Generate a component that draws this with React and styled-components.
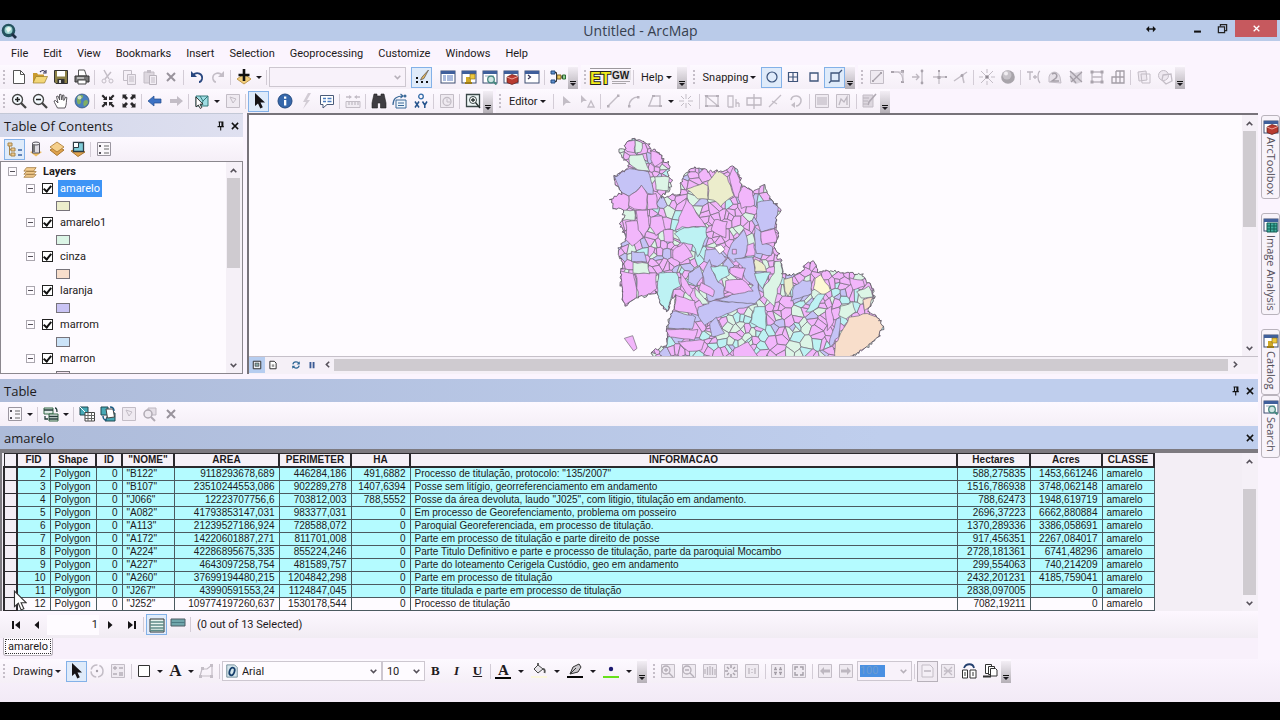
import React from 'react'
import styled, { createGlobalStyle, css } from 'styled-components'

const GlobalStyle = createGlobalStyle`
  * { box-sizing: border-box; }
  body {
    margin: 0;
    background: #000;
    color: #1d1a20;
    font-family: Roboto, "Open Sans", sans-serif;
    font-size: 11px;
  }
  button, input, select {
    font: inherit;
    color: inherit;
    margin: 0;
    padding: 0;
    border: none;
    background: transparent;
    border-radius: 0;
  }
  h1, h2 {
    margin: 0;
    font-family: "Open Sans", "Noto Sans", sans-serif;
    font-weight: 400;
  }
`

/* ---------- icons ---------- */

const off = '#c3bdc6'
const line = (d, color = '#444', w = 1.3) => <path d={d} fill="none" stroke={color} strokeWidth={w} />
const win = <><rect x="1" y="2" width="14" height="12" fill="#fff" stroke="#3f4f73" /><path d="M1 2h14v3H1z" fill="#3f5f9b" /></>
const page = <path d="M1.5 1.5h13v13h-13z" fill="#efeaf1" stroke={off} />
const arrow = (c) => <path d="M4 0v13l3-2.600 2.300 5 2.500-1.200-2.300-4.700H14z" fill={c} />

const icons = {
  new: <><path d="M2.500 1.500h7l4 4v9h-11z" fill="#fff" stroke="#555" />{line('M9.500 1.500v4h4', '#555', 1)}</>,
  open: <><path d="M1 14V4h4l1 1.500h6V14z" fill="#c99a2e" /><path d="M1 14l3-6.500h11.500L12.500 14z" fill="#f3d778" stroke="#9a7b2a" strokeWidth=".7" />{line('M8 3c2-2 4-2 5 0m1-2v3h-3', '#335', 1.1)}</>,
  save: <><path d="M1.500 1.500h13v13H3l-1.500-1.500z" fill="#8a7f45" stroke="#333" /><path d="M4 2h8v5.500H4z" fill="#fff" /><path d="M4.500 10h7v4.500h-7z" fill="#333" /><path d="M6 11h2v3H6z" fill="#ddd" /></>,
  print: <><path d="M4.500 1h6l2 6h-8z" fill="#fff" stroke="#555" /><path d="M1 7h14v6H1z" fill="#777" stroke="#333" /><path d="M4 11h8v4H4z" fill="#fff" stroke="#444" />{line('M3 9h7', '#ddd')}</>,
  cut: <>{line('M4 1l5 9M11 3L5 10', off, 1.500)}<circle cx="4" cy="12" r="2" fill="none" stroke={off} /><circle cx="11" cy="12" r="2" fill="none" stroke={off} /></>,
  copy: <><path d="M2.500 1.500h8v10h-8z" fill="#f5f0f7" stroke={off} /><path d="M6.500 5.500h8v10h-8z" fill="#efeaf1" stroke={off} />{line('M8 8h5M8 10h5M8 12h5', off, 1)}</>,
  paste: <><path d="M2 3h10v11H2z" fill="#ddd7df" stroke={off} /><path d="M5 1h4v3H5z" fill={off} /><path d="M7.500 6.500h7v9h-7z" fill="#f3eef5" stroke="#b9b3bc" />{line('M9 9h4M9 11h4M9 13h4', off, 1)}</>,
  del: line('M4 4l8 8M12 4l-8 8', '#99939c', 2),
  undo: <>{line('M4 6c4-4 10-1 9 4-.500 2-2 3-3 3', '#28467f', 1.800)}<path d="M2 2v6h6z" fill="#28467f" /></>,
  redo: <>{line('M12 6C8 2 2 5 3 10c.500 2 2 3 3 3', off, 1.600)}<path d="M14 2v6H8z" fill={off} /></>,
  add: <><path d="M1 10l7-5 7 5-7 5z" fill="#f0cd7c" stroke="#c29a4e" />{line('M8 0v12M2.500 6h11', '#111', 2.600)}</>,
  sketch: <><path d="M2 12h2v2H2zM7 12h2v2H7zM12 12h2v2h-2zM2 8h2v2H2z" fill="#111" /><path d="M14.500 1L8 8l-1.500 3L10 9.500z" fill="#e0b25a" stroke="#555" strokeWidth=".7" /></>,
  winTable: <>{win}{line('M3 7h3M7 7h6M3 9h3M7 9h6M3 11h3M7 11h6', '#5679bd', 1)}</>,
  winCatalog: <>{win}<path d="M5 8h5v6H5z" fill="#d0a824" /><path d="M9 5h5v5H9z" fill="#efc93d" stroke="#80671b" strokeWidth=".6" /><path d="M4 13h7v2H4z" fill="#9b7b1b" /></>,
  winSearch: <>{win}{line('M3 7h9', '#9ab', 1)}<circle cx="9" cy="10.500" r="3.300" fill="#cfe5e3" stroke="#45877f" strokeWidth="1.300" />{line('M12 13l2.500 2.500', '#45877f', 2)}</>,
  winToolbox: <>{win}<path d="M4 8l5-2.500 6 2V13l-6 2.500-5-2z" fill="#b83a30" stroke="#5f1c18" strokeWidth=".7" /><path d="M4 8l5 2 6-2.500" fill="none" stroke="#f2a69b" /></>,
  winPython: <>{win}{line('M4 6l2.500 2L4 10', '#335', 1.200)}</>,
  winImage: <>{win}<path d="M4 6h10v9H4z" fill="#3fae9e" stroke="#155e54" />{line('M7.500 6v9M11 6v9M4 9h10M4 12h10', '#155e54', 1)}</>,
  model: <><path d="M1 2h4v3H1zM1 11h4v3H1z" fill="#5d8fcf" stroke="#244a7c" /><path d="M7 6h4v4H7z" fill="#eac75d" stroke="#7a6020" /><path d="M12.500 6h3v4h-3z" fill="#8fcf93" stroke="#2f6a33" />{line('M5 3.500h1.500V8M5 12.500h1.500V8H7M11 8h2', '#333', 1)}</>,
  zoomIn: <><circle cx="6.500" cy="6.500" r="5" fill="#f5fbff" stroke="#444" strokeWidth="1.300" />{line('M10 10l5 5', '#444', 2.300)}{line('M4 6.500h5M6.500 4v5', '#222', 1.500)}</>,
  zoomOut: <><circle cx="6.500" cy="6.500" r="5" fill="#f5fbff" stroke="#444" strokeWidth="1.300" />{line('M10 10l5 5', '#444', 2.300)}{line('M4 6.500h5', '#222', 1.500)}</>,
  pan: <path d="M4.500 15C3 12 1.500 10 1 8l1.500-.500L5 10 3.500 3.500l1.500-.500 1.700 4L6.500 1.500 8 1.300 8.800 7l.9-5 1.300.2-.2 5.300 1.900-3.500 1.200.6C13 8 14 11 12 15z" fill="#fff" stroke="#4a464c" strokeWidth=".9" />,
  globe: <><circle cx="8" cy="8" r="7" fill="#4a7fbe" stroke="#2a4a70" strokeWidth=".7" /><path d="M4 3c3-2 6-1 5 1S6 6 7 8s-2 4-3 3-2-5 0-8zM10 8c2-2 4-1 4 1s-3 5-4 4-1-3 0-5z" fill="#7fae62" /><circle cx="5.500" cy="4.500" r="2" fill="#fff" opacity=".6" /></>,
  shrink: <path d="M7 7H3l1.200-1.200L1.500 3 3 1.500l2.800 2.700L7 3zM9 7V3l1.200 1.200L13 1.500 14.500 3l-2.700 2.800L13 7zM7 9v4l-1.200-1.200L3 14.500 1.500 13l2.700-2.800L3 9zM9 9h4l-1.200 1.200 2.700 2.800-1.500 1.500-2.800-2.700L9 13z" fill="#2a282b" />,
  expand: <path d="M1.500 1.500H6L4.800 2.800 7 5 5 7 2.800 4.800 1.500 6zM14.500 1.500V6l-1.300-1.200L11 7 9 5l2.200-2.200L10 1.500zM1.500 14.500V10l1.300 1.200L5 9l2 2-2.200 2.200L6 14.500zM14.500 14.500H10l1.200-1.300L9 11l2-2 2.200 2.200L14.500 10z" fill="#2a282b" />,
  back: <path d="M1 8l6-5v3h7v4H7v3z" fill="#3c72c4" stroke="#234c8d" strokeWidth=".7" />,
  forward: <path d="M15 8L9 3v3H2v4h7v3z" fill={off} />,
  selFeature: <><path d="M2 3h12v10H2z" fill="#9fdde4" stroke="#377" />{line('M6 3l3 5 5-5M9 8l-2 5', '#377', 1)}<path d="M2 4v10l2.300-2 2 3.500 1.500-1L6 11.200H9z" fill="#fff" stroke="#222" strokeWidth=".9" /></>,
  clearSel: <>{page}{line('M5 4l6 2-3 4z', off, 1)}</>,
  arrow: arrow('#151316'),
  info: <><circle cx="8" cy="8" r="7" fill="#3667ab" stroke="#244a80" /><path d="M7 7h2.300v5.500H7zM7 3.500h2.300v2.200H7z" fill="#fff" /></>,
  bolt: <path d="M10 0L5 9h3l-3 7 7-9H9l4-7z" fill="#d2ccd5" />,
  html: <><path d="M1.500 2.500h13v9H8l-4 3.500v-3.500H1.500z" fill="#fff" stroke="#4a5a78" />{line('M4 5.500h3M8.500 5.500h4M4 8.500h3M8.500 8.500h4', '#4c7cc0', 1.600)}</>,
  measure: <><path d="M1 8.500h14v6H1z" fill="#f1ecf3" stroke={off} />{line('M4 9v3M7 9v3M10 9v3M13 9v3M1 4h5M10 4h5', off, 1.300)}<path d="M7 4L4 2v4zM9 4l3-2v4z" fill={off} /></>,
  find: <path d="M3 1h3v2h4V1h3l2 9v5H9.500v-5h-3v5H1v-5z" fill="#3f3d42" stroke="#222" strokeWidth=".6" />,
  route: <><path d="M4 7h10v8H4z" fill="#eef5fb" stroke="#3c6a99" />{line('M1 12c0-7 4-9 10-9M8.500 1L11 3 8.500 5M6 10h6M6 12.500h6', '#3c6a99', 1.200)}<circle cx="13" cy="3" r="1.500" fill="#3c6a99" /></>,
  xy: <><circle cx="8" cy="3.500" r="2.300" fill="none" stroke="#336ca8" strokeWidth="1.300" />{line('M2 8.500l4 6M6 8.500l-4 6M9.500 8.500L11.800 12l2.200-3.500M11.800 12v3', '#24528c', 1.500)}</>,
  time: <>{page}<circle cx="8" cy="8.500" r="4" fill="none" stroke={off} strokeWidth="1.300" />{line('M8 6v3h3', off, 1)}</>,
  viewer: <><path d="M1.500 1.500h13v12h-13z" fill="#eef6f6" stroke="#3b4748" strokeWidth="1.300" /><circle cx="8" cy="7" r="3.500" fill="#fff" stroke="#3b4748" />{line('M6 7h4M8 5v4M10.500 9.500L15 15', '#26302f', 1.300)}</>,
  snapPoint: <circle cx="8" cy="8" r="5" fill="none" stroke="#39527b" strokeWidth="1.200" />,
  snapEnd: line('M3.500 3.500h9v9h-9zM8 3.500v9M3.500 8h9', '#3f557b', 1.200),
  snapVertex: line('M4 4h8v8H4z', '#3f557b', 1.300),
  snapEdge: <>{line('M4 4h8v8H4zM2 14l2-2M12 4l3-3', '#3f557b', 1.300)}</>,
  gA: <>{page}{line('M4 12l8-8', '#a9a3ac')}<path d="M3 11h2v2H3zM11 3h2v2h-2z" fill="#a9a3ac" /></>,
  gB: <>{line('M2 3h6c3 1 5 5 5 10', off)}<path d="M1 2h3v2H1zM11 1h3v3h-3zM11 12h3v2h-3z" fill="#a9a3ac" />{line('M8 3h5v10', off, 1)}</>,
  gC: <>{line('M1 8h6M11 1v14M5 5l3 3-3 3', '#bdb7c0')}<circle cx="11" cy="2" r="1.400" fill="#a9a3ac" /><circle cx="11" cy="14" r="1.400" fill="#a9a3ac" /></>,
  gD: <>{line('M1 8h14M7 1v14', off)}<path d="M5.500 7h3v3h-3zM13 7h2v2h-2zM6 1h2v2H6z" fill="#a9a3ac" /></>,
  gE: <>{line('M1 12L14 3M9 5l2 9', off, 1.500)}<circle cx="9" cy="6.500" r="1.500" fill="#a9a3ac" /></>,
  burst: <>{line('M2 2l12 12M14 2L2 14M8 0v4M8 12v4M0 8h4M12 8h4', off, 1)}<circle cx="8" cy="8" r="1.800" fill="#8f8992" /></>,
  sphere: <><circle cx="8" cy="8" r="6.800" fill="#a8a4aa" /><circle cx="7" cy="6" r="4.500" fill="#c7c3c9" /><circle cx="6" cy="4.500" r="2" fill="#f1eef2" /></>,
  gF: line('M1 3h6M4 3v8M7 8h4M9 6v4M14 2c-2 1-2 4-2 6s0 4 2 6', '#bdb7c0'),
  gG: <><path d="M2 13V8c1-6 9-7 11 0l1 6z" fill="#e6e0e8" stroke={off} />{line('M5 5c4-2 6 1 4 4l-4 3h7', '#a49ea7', 1.500)}</>,
  gH: <><path d="M2 2l5 2 7-2v11l-6 2-6-3z" fill="#d8d3db" />{line('M2 2l12 11M14 3L3 13M2 7l6 7', '#a49ea7')}</>,
  gI: <>{line('M3 3h10v10H3zM3 8h10', '#bdb7c0')}<path d="M1.500 1.500h3v3h-3zM11.500 1.500h3v3h-3zM1.500 11.500h3v3h-3zM11.500 11.500h3v3h-3z" fill="#a9a3ac" /></>,
  gJ: line('M6 2h8v12H2V8h12M6 2v12M10 2v12', '#a49ea7'),
  gK: <><path d="M2 3l8-1 1 9-8 1z" fill="#eee8f0" stroke={off} /><path d="M5 5h9v9H6z" fill="none" stroke={off} /></>,
  gL: <><circle cx="6.500" cy="6.500" r="5" fill="#eee8f0" stroke={off} />{line('M6 6l8-1 1 7-6 3-4-4z', off)}</>,
  editTool: <path d="M5 3v10l3-3h5z" fill={off} />,
  editNote: <><path d="M2 2v8l2.500-2H8z" fill={off} /><path d="M9 14l3-6 3 6z" fill="none" stroke={off} strokeWidth="1.300" /></>,
  segment: <>{line('M3 13L13 3', off, 1.500)}<path d="M2 12h2.500v2.500H2zM12 1.500h2.500V4H12z" fill="#b5afb8" /></>,
  arc: <>{line('M3 13c0-5 4-9 9-9', off, 1.500)}<path d="M2 12h2.500v2.500H2zM11 3h2.500v2.500H11z" fill="#b5afb8" /></>,
  trace: <>{line('M2 13L6 3h7v10zM1 13h4', off, 1.400)}<path d="M5 2h3v2H5zM12 12h3v2h-3z" fill="#b5afb8" /></>,
  pointTool: <>{line('M8 1v5M8 10v5M1 8h5M10 8h5M3 3l3 3M13 3l-3 3M3 13l3-3M13 13l-3-3', off, 1)}</>,
  reshape: <>{line('M2 3v10h12L2 3h12v10', off, 1.300)}<path d="M1 2h3v2H1zM12 2h3v2h-3zM1 12h3v2H1zM12 12h3v2h-3z" fill="#b5afb8" /></>,
  cutPoly: line('M3 14V3h5v11H3M11 6v8M14 10v4M11 10h3', off, 1.300),
  split: line('M1 5h14v7H1zM8 1v15', '#bdb7c0', 1.300),
  splitLine: <>{line('M2 14L14 2M5 8l5 3', off, 1.300)}</>,
  rotate: <>{line('M3 7c1-6 11-5 10 1 0 3-3 5-5 5', off, 1.600)}<path d="M7 9v6l-4-3z" fill={off} /></>,
  attrs: <>{page}<path d="M3 4h10v8H3z" fill="#d4ced7" /></>,
  sketchProp: <>{page}{line('M4 12l2-6 3 3 3-5v8', '#bdb7c0')}</>,
  createFeat: <><path d="M2 2h10v12H2z" fill="#ddd7df" stroke={off} />{line('M15 1L8 9l-1 3', '#b0aab3', 1.600)}{line('M2 5h6M2 8h5M2 11h4', '#b9b3bc', 1)}</>,
  drawOrder: <><path d="M1 2h4v3H1zM4 7h4v3H4zM4 12h4v3H4z" fill="#edc98d" stroke="#a7854b" />{line('M2.500 5v9H4M2.500 8.500H4', '#a7854b', 1)}{line('M11 9h4M11 14h4', '#3b66a7', 1.600)}</>,
  source: <><path d="M2 11l6-2 6 2-6 4.500z" fill="#edbd65" /><path d="M4.500 2h7v10h-7z" fill="#dedbe2" stroke="#55525c" /><ellipse cx="8" cy="2.500" rx="3.500" ry="1.500" fill="#f4f3f6" stroke="#55525c" /><path d="M5 4h2v7H5z" fill="#777" /></>,
  visible: <><path d="M1 9l7-4 7 4-7 5.500z" fill="#dfa14b" stroke="#a9762f" /><path d="M1 6l7-5 7 5-7 5z" fill="#f5cf8c" stroke="#a9762f" strokeWidth=".8" /></>,
  bySel: <><path d="M1 10l7-3 7 4-7 4.500z" fill="#e0a34e" stroke="#a9762f" /><path d="M3.500 1.500h10v9h-10z" fill="#7fcbd8" stroke="#2c3b44" strokeWidth="1.300" /><path d="M3.500 1.500h5v5h-5z" fill="#fff" stroke="#2c3b44" /></>,
  options: <><path d="M1.500 1.500h13v13h-13z" fill="#faf7fb" stroke="#9b96a0" />{line('M8 5h5M8 8h5M8 12h5', '#666', 1)}<path d="M3 4h2v2H3zM3 11h2v2H3z" fill="#55515a" /></>,
  related: <><path d="M1 2h9v6H1z" fill="#dfe9e6" stroke="#364" /><path d="M6 8h9v7H6z" fill="#dfe9e6" stroke="#364" />{line('M1 4h9M6 10.500h9M6 13h9M2 10v3h3M12 2c2 0 2 2 2 4', '#253c3a', 1.300)}</>,
  selAttr: <><path d="M1 1h8v8H1z" fill="#47a9b7" stroke="#1f4850" />{line('M1 1l8 8', '#fff', 1)}<path d="M6 6.500h9.500v8.500H6z" fill="#fff" stroke="#444" />{line('M6 9.500h9.500M6 12.500h9.500M9 6.500V15M12.500 6.500V15', '#666', 1)}</>,
  switchSel: <><path d="M1 1h7v8H1zM9 7h6v8H5z" fill="#47a9b7" stroke="#1f4850" /><path d="M6 3h7l1.500 8-7 1z" fill="#fff" stroke="#444" />{line('M3 10c0 4 2 4 4 4M10 1c3 0 4 1 4 4', '#1d5c84', 1.500)}</>,
  zoomSel: <><path d="M6 2h8v7H6z" fill="#e4dee6" stroke="#bdb7c0" /><circle cx="6" cy="8" r="4" fill="#eee9f0" stroke="#b0aab3" strokeWidth="1.500" />{line('M9 11l4 4', '#b0aab3', 2)}</>,
  first: <path d="M4 4h2v8H4zM12 4v8L7 8z" fill="#151316" />,
  prev: <path d="M10 4v8L5.500 8z" fill="#151316" />,
  next: <path d="M6 4v8l4.500-4z" fill="#151316" />,
  last: <path d="M11 4h2v8h-2zM5 4v8l5-4z" fill="#151316" />,
  allRows: <><path d="M1 2h14v13H1z" fill="#e7f3ef" stroke="#333" />{line('M1 5h14M1 8h14M1 11h14M1 13.500h14', '#5d8b88', 1.500)}</>,
  selRows: <><path d="M1 2h14v7H1z" fill="#6fa6ab" stroke="#4d5c64" />{line('M1 5.500h14', '#4b7c84', 1)}</>,
  spin: <><circle cx="8" cy="8" r="6" fill="none" stroke={off} strokeWidth="1.500" strokeDasharray="8 2" /><circle cx="8" cy="8" r="1.200" fill="#a49ea7" /></>,
  nudge: <>{page}{line('M3 5h4M5 3v4M9 5h4M3 11h4M9 10h4M9 12h4', '#b5afb8', 1.300)}</>,
  rect: <path d="M2.500 2.500h11v11h-11z" fill="#fff" stroke="#333" />,
  vertices: <>{line('M2 13L4 6h5l5-4v11z', off, 1.200)}<path d="M1 12h3v3H1zM3 4h3v3H3zM12 1h3v3h-3zM12 12h3v3h-3z" fill="#c4bec7" /></>,
  fillColor: <><path d="M3 6l4-4 5 4-5 4z" fill="#e8e5ea" stroke="#444" />{line('M7 2V0M12 6c2 0 2 2 1.500 4', '#555', 1.800)}<path d="M0 13h16v2H0z" fill="#fbf6dc" /></>,
  lineColor: <><path d="M3 11l3-7 6-3 2 3-3 5z" fill="#cbc8cd" stroke="#333" />{line('M3 11l6-6', '#333', 1)}<path d="M0 13h16v2H0z" fill="#050505" /></>,
  markColor: <><circle cx="8" cy="6" r="2.200" fill="#1c1870" /><path d="M0 13h16v2H0z" fill="#68e01c" /></>,
  pZoomIn: <>{page}<circle cx="6" cy="7" r="4" fill="none" stroke="#b5afb8" strokeWidth="1.300" />{line('M9 10l4 4M4 7h4M6 5v4', '#b5afb8')}</>,
  pZoomOut: <>{page}<circle cx="6" cy="7" r="4" fill="none" stroke="#b5afb8" strokeWidth="1.300" />{line('M9 10l4 4M4 7h4', '#b5afb8')}</>,
  pPan: <>{page}{line('M3 11V6M5.500 12V4M8 12V3M10.500 12V4M13 12V6', '#bdb7c0')}</>,
  pFull: <>{page}{line('M8 2v3M8 11v3M2 8h3M11 8h3M4 4l2 2M12 4l-2 2M4 12l2-2M12 12l-2-2', '#aaa4ad', 1.500)}</>,
  pOne: <>{page}{line('M5 5v6M11 5v6M8 6v1M8 9v1', '#bdb7c0')}</>,
  pIn: <>{page}{line('M4 6.500h3M5.500 4v3M9 6.500h3M10.500 4v3M4 9.500h3M5.500 9v3M9 9.500h3M10.500 9v3', '#a49ea7', 1.400)}</>,
  pOut: <>{page}{line('M4 7V4h3M12 7V4H9M4 9v3h3M12 9v3H9', '#a49ea7', 1.400)}</>,
  pBack: <>{page}<path d="M3 8l4-4v2.500h6v3H7V12z" fill="#bdb7c0" /></>,
  pNext: <>{page}<path d="M13 8L9 4v2.500H3v3h6V12z" fill="#bdb7c0" /></>,
  draft: <><path d="M3 2h8l3 3v9H3z" fill="#f4eff6" stroke={off} />{line('M5 8h7', '#b5afb8')}</>,
  focusFrame: <>{page}{line('M4 4l8 8M12 4l-8 8M4 8h8', off)}</>,
  changeLayout: <><path d="M1.500 7h5v8h-5zM9 7h6v8H9z" fill="#fff" stroke="#333" />{line('M3 5c2-5 9-5 10 0', '#24406f', 1.800)}{line('M3 10h2M3 12h2M11 10h2M11 12h2', '#333', 1.200)}</>,
  dataDriven: <><path d="M3.500 1.500h6v9h-6z" fill="#fff" stroke="#333" /><path d="M6.500 3.500h6v8h-6z" fill="#fff" stroke="#333" /><path d="M8.500 5.500h5l1.500 1.500v6H8.500z" fill="#fff" stroke="#333" />{line('M1 13.500h8', '#333', 2)}</>,
  dataView: <><path d="M2 2h12v12H2z" fill="#eef3f8" stroke="#333" strokeWidth="1.600" /><path d="M5 5h6v5H5z" fill="#8aa" stroke="#333" /></>,
  layoutView: <><path d="M3 2h7l3 3v9H3z" fill="#fff" stroke="#333" strokeWidth="1.600" /><path d="M6 7h4v4H6z" fill="#999" /></>,
  refresh: <>{line('M3 7c1-5 8-5 10-1M13 9c-1 5-8 5-10 1', '#2e6796', 2)}<path d="M14 2v5H9zM2 14V9h5z" fill="#2e6796" /></>,
  pause: <path d="M4 3h3v10H4zM9 3h3v10H9z" fill="#3b5a94" />,
  pin: line('M4 1.500h7v7M5.500 2v7M9.500 2v7M2.500 9h10M7.500 9v6', '#111', 1.700),
  close: line('M3 3l10 10M13 3L3 13', '#111', 2.300),
  up: line('M3 11l5-5 5 5', '#555059', 2.800),
  down: line('M3 5l5 5 5-5', '#555059', 2.800),
  left: line('M11 3L6 8l5 5', '#555059', 2.800),
  right: line('M5 3l5 5-5 5', '#555059', 2.800),
  resize: <>{line('M2 8h12', '#111', 2.200)}<path d="M0 8l5-5v10zM16 8l-5-5v10z" fill="#111" /></>,
  minimize: <path d="M3 11h10v3H3z" fill="#111" />,
  restore: <><path d="M2 5.500h9V14H2z" fill="none" stroke="#222" strokeWidth="1.800" />{line('M5 5V2.500h9V11h-3', '#222', 1.800)}</>,
  logo: <><circle cx="7.500" cy="7.500" r="6.800" fill="#24535f" /><circle cx="7.500" cy="7" r="4" fill="#9ad2cf" /><path d="M5 6c2-3 5-2 5 0s-2 2-3 4z" fill="#e8f6f0" />{line('M11 11l4 4', '#1f2f45', 2.800)}</>,
  layers: <><path d="M1 14l3-3h11l-3 3zM1 10.500l3-3h11l-3 3zM1 7l3-4h11l-3 4z" fill="#f6cf92" stroke="#a0763a" strokeWidth=".9" /></>,
  fontMark: <><path d="M2 1h9l3 3v11H2z" fill="#d5e6ec" stroke="#6b8794" /><ellipse cx="8" cy="8.500" rx="2.800" ry="4.500" transform="rotate(20 8 8.500)" fill="none" stroke="#173f6b" strokeWidth="2" /></>,
}

const Glyph = styled.svg`
  display: block;
  flex: none;
  width: ${(p) => p.$size || 16}px;
  height: ${(p) => p.$size || 16}px;
`

const Icon = ({ name, size }) => <Glyph viewBox="0 0 16 16" $size={size} aria-hidden="true">{icons[name]}</Glyph>

/* ---------- toolbar ---------- */

const ToolRow = styled.div`
  display: flex;
  align-items: center;
  height: 24px;
  gap: 3px;
`

const Bar = styled.div`
  display: flex;
  align-items: center;
  height: 24px;
  padding-left: ${(p) => p.$inset || 0}px;
  background: linear-gradient(#fdf9ff, #f5eff7);
`

const Grip = styled.span`
  width: 8px;
  height: 14px;
  border-right: 3px solid transparent;
  background: repeating-linear-gradient(#c5bec8 0 2px, transparent 2px 4px) no-repeat 3px 0 / 2px 14px;
`

const ToolButton = styled.button`
  display: flex;
  align-items: center;
  justify-content: center;
  flex: none;
  width: 21px;
  height: 21px;
  border: 1px solid ${(p) => (p.$on ? '#83b1e8' : 'transparent')};
  background: ${(p) => (p.$on ? '#dfebfa' : 'transparent')};
  ${(p) => p.$framed && css`
    border-color: #b7b1ba;
    background: #f0eaf2;
  `}
`

const TextButton = styled.button`
  display: flex;
  align-items: center;
  gap: 2px;
  height: 21px;
  padding: 0 5px;
  white-space: nowrap;
`

const LogoButton = styled.button`
  flex: none;
  width: 42px;
  height: 22px;
  svg { display: block; }
`

const DropButton = styled.button`
  display: flex;
  align-items: center;
  justify-content: center;
  width: ${(p) => (p.$wide ? 15 : 10)}px;
  height: 20px;
`

const Caret = styled.span`
  border: 3px solid transparent;
  border-top: 3px solid #1d1a20;
  border-bottom: none;
`

const Divider = styled.span`
  flex: none;
  width: 1px;
  height: 15px;
  margin: 0 2px;
  background: ${(p) => (p.$blank ? 'transparent' : '#d3ccd6')};
`

const More = styled.button`
  display: flex;
  flex-direction: column;
  align-items: center;
  justify-content: flex-end;
  gap: 1px;
  width: 10px;
  height: 22px;
  padding-bottom: 3px;
  background: linear-gradient(#f3eef5, #b5b0b7);
  align-self: flex-end;
  &::before {
    content: '';
    width: 6px;
    height: 1px;
    background: #111;
  }
`

const Combo = styled.select`
  appearance: none;
  height: 20px;
  width: ${(p) => p.$width}px;
  padding: 0 18px 0 ${(p) => p.$pad || 4}px;
  border: 1px solid #cdc7d0;
  background: ${(p) => (p.disabled ? '#f8f2fa' : '#fefbff')};
  opacity: 1;
`

const ComboBox = styled.label`
  position: relative;
  display: flex;
  align-items: center;
`

const ComboChevron = styled.span`
  position: absolute;
  right: 4px;
  opacity: ${(p) => (p.$faded ? 0.4 : 1)};
  pointer-events: none;
`

const ComboMark = styled.span`
  position: absolute;
  left: 3px;
  pointer-events: none;
`

const Chosen = styled.span`
  position: absolute;
  left: 3px;
  width: 25px;
  height: 12px;
  background: #4a90e2;
  color: #6d9bd0;
  line-height: 12px;
`

const Emphasis = styled.span`
  font-family: "Liberation Serif", serif;
  font-size: ${(p) => (p.$kind === 'A' ? 17 : 13)}px;
  font-weight: 700;
  font-style: ${(p) => (p.$kind === 'I' ? 'italic' : 'normal')};
  text-decoration: ${(p) => (p.$kind === 'U' ? 'underline' : 'none')};
`

const InkButton = styled(ToolButton)`
  span {
    width: 16px;
    border-bottom: 2px solid #050505;
    font: 700 15px/13px "Liberation Serif", serif;
  }
`

const Select = ({ label, width, value, faded, mark, chosen }) => (
  <ComboBox>
    <Combo aria-label={label} $width={width} $pad={mark ? 19 : 4} disabled={faded} defaultValue={value}>
      <option>{value}</option>
    </Combo>
    {mark && <ComboMark><Icon name={mark} size={14} /></ComboMark>}
    {chosen && <Chosen>{chosen}</Chosen>}
    <ComboChevron $faded={faded}><Icon name="down" size={9} /></ComboChevron>
  </ComboBox>
)

const EtLogo = () => (
  <LogoButton aria-label="ET GeoWizards">
    <svg width="42" height="22" viewBox="0 0 42 22">
      <path d="M1 2.500h41" stroke="#9c989d" />
      <rect x="22" y="4" width="20" height="10" fill="#e3dfe4" />
      <path d="M23 15.500h18M23 17.500h14" stroke="#aaa6ab" />
      <text x="1" y="18" fontFamily="Liberation Sans" fontWeight="700" fontSize="16" fill="#f0ea1c" stroke="#222" strokeWidth="2" paintOrder="stroke">ET</text>
      <text x="23" y="13" fontFamily="Liberation Sans" fontWeight="700" fontSize="10" fill="#1b1b1b">GW</text>
    </svg>
  </LogoButton>
)

/* "|" is a divider, "_" a blank gap, "v" and "V" drop arrows; a leading "*" marks a pressed tool */
const Tools = ({ items }) => items.split(' ').map((item, i) => {
  if (item === '|' || item === '_') return <Divider key={i} $blank={item === '_'} />
  if (item === 'v' || item === 'V') return <DropButton key={i} $wide={item === 'V'} aria-label="More"><Caret /></DropButton>
  const name = item.replace(/^[*#]/, '')
  return (
    <ToolButton key={i} aria-label={name} $on={item[0] === '*'} $framed={item[0] === '#'}>
      <Icon name={name} />
    </ToolButton>
  )
})

/* ---------- frame ---------- */

const Page = styled.div`
  display: flex;
  flex-direction: column;
  height: 100vh;
  min-height: 560px;
  padding: 20px 0 18px;
`

const Frame = styled.div`
  flex: 1;
  min-height: 0;
  display: flex;
  flex-direction: column;
  background: #fbf4fe;
`

const TitleBar = styled.header`
  display: grid;
  grid-template-columns: 1fr auto 1fr;
  align-items: center;
  height: 21px;
  padding-left: 1px;
  background: #bacbe9;
  h1 {
    font-size: 14px;
    line-height: 20px;
    color: #37404f;
  }
`

const WindowButtons = styled.div`
  display: flex;
  justify-content: flex-end;
  align-items: center;
  align-self: start;
  padding-right: 3px;
`

const WindowButton = styled.button`
  display: flex;
  align-items: center;
  justify-content: center;
  width: 25px;
  height: 17px;
  &:first-child { margin-right: 22px; }
`

const CloseWindow = styled(WindowButton)`
  width: 42px;
  background: #c6595e;
  path { stroke: #fff; }
`

const Menu = styled.nav`
  display: flex;
  align-items: center;
  gap: 15px;
  height: 24px;
  padding-left: 11px;
`

const Body = styled.div`
  flex: 1;
  min-height: 0;
  display: flex;
`

const Work = styled.div`
  flex: 1;
  min-width: 0;
  display: flex;
  flex-direction: column;
`

const Upper = styled.div`
  flex: 1;
  min-height: 0;
  display: flex;
  gap: 4px;
  padding-bottom: 5px;
`

const PanelHead = styled.div`
  display: flex;
  align-items: center;
  flex: none;
  height: 23px;
  padding: 0 1px 0 4px;
  background: ${(p) => (p.$pale ? 'linear-gradient(90deg, #d2d7ea, #dfe0f0)' : 'linear-gradient(90deg, #adbbd9, #bfceed 70%)')};
  h2 {
    flex: 1;
    font-size: 13px;
    line-height: 20px;
  }
`

const HeadButton = styled.button`
  display: flex;
  justify-content: center;
  width: 14px;
`

/* ---------- table of contents ---------- */

const Contents = styled.aside`
  flex: none;
  width: 243px;
  display: flex;
  flex-direction: column;
  border-top: 1px solid #c3c8d6;
`

const TreeBox = styled.div`
  flex: 1;
  min-height: 0;
  display: flex;
  border: 1px solid #8b878e;
  background: #fefbff;
  overflow: hidden;
`

const Tree = styled.ul`
  flex: 1;
  margin: 0;
  padding: 1px 0 0;
  list-style: none;
`

const TreeRoot = styled.div`
  display: flex;
  align-items: center;
  gap: 6px;
  height: 17px;
  padding-left: 7px;
  font-weight: 700;
`

const Toggle = styled.button`
  flex: none;
  display: flex;
  align-items: center;
  width: 9px;
  height: 9px;
  border: 1px solid #aaa6ae;
  &::after {
    content: '';
    flex: 1;
    height: 1px;
    margin: 0 1px;
    background: #55515a;
  }
`

const Layer = styled.li`
  height: 34px;
  padding-left: 25px;
`

const LayerRow = styled.div`
  display: flex;
  align-items: center;
  height: 17px;
  label {
    line-height: 17px;
    padding: 0 2px;
    margin-left: 5px;
    background: ${(p) => (p.$active ? '#3d94f6' : 'transparent')};
    color: ${(p) => (p.$active ? '#fff' : '#1d1a20')};
  }
`

const Check = styled.input`
  appearance: none;
  display: grid;
  place-items: center;
  width: 11px;
  height: 11px;
  margin-left: 7px;
  border: 1px solid #222;
  background: #fff;
  &:checked::after {
    content: '';
    width: 3px;
    height: 6px;
    margin-bottom: 2px;
    border: solid #111;
    border-width: 0 2px 2px 0;
    rotate: 40deg;
  }
`

const Swatch = styled.span`
  display: block;
  width: 14px;
  height: 10px;
  margin: 4px 0 0 30px;
  border: 1px solid #77737a;
  background: ${(p) => p.$color};
`

/* ---------- scroll bars ---------- */

const Track = styled.div`
  flex: ${(p) => (p.$row ? 1 : 'none')};
  display: flex;
  flex-direction: ${(p) => (p.$row ? 'row' : 'column')};
  align-items: center;
  ${(p) => (p.$row ? 'height: 15px;' : 'width: 16px;')}
  padding-right: 2px;
  background: #f5f0f7;
`

const Thumb = styled.span`
  flex: ${(p) => p.$grow || 1};
  ${(p) => (p.$row ? 'height: 12px;' : 'width: 13px;')}
  background: #cfcbd0;
`

const Rest = styled.span`
  flex: ${(p) => p.$grow};
`

const Step = styled.button`
  display: flex;
  align-items: center;
  justify-content: center;
  flex: none;
  width: 14px;
  height: 16px;
`

const VScroll = ({ before = 0, size, after = 0 }) => (
  <Track>
    <Step aria-label="Scroll up"><Icon name="up" size={9} /></Step>
    <Rest $grow={before} />
    <Thumb $grow={size} />
    <Rest $grow={after} />
    <Step aria-label="Scroll down"><Icon name="down" size={9} /></Step>
  </Track>
)

/* ---------- map ---------- */

const MapPane = styled.section`
  flex: 1;
  min-width: 0;
  display: flex;
  flex-direction: column;
  border: solid #77737a;
  border-width: 2px 0 0 2px;
`

const MapRow = styled.div`
  flex: 1;
  min-height: 0;
  display: flex;
`

const Canvas = styled.div`
  flex: 1;
  overflow: hidden;
  background: #fefbff;
  svg {
    display: block;
    margin: 15px auto 0;
  }
`

const MapFoot = styled.div`
  display: flex;
  align-items: flex-start;
  height: 18px;
  padding-right: 14px;
  border-top: 1px solid #c6c0c9;
  background: #f5f0f7;
`

const ViewTab = styled.button`
  display: flex;
  align-items: center;
  justify-content: center;
  width: 16px;
  height: 16px;
  margin-right: ${(p) => p.$gap || 0}px;
  background: ${(p) => (p.$on ? '#b6cdf0' : 'transparent')};
`

const pink = '#f2b6fb'
const blue = '#c5c3f6'
const mint = '#dcf5e6'
const aqua = '#bdf2f3'
const sand = '#ecedcc'
const peach = '#f8decb'

const coast = '72,35 90,30 110,28 125,35 145,45 150,60 165,58 180,75 190,95 205,97 205,115 200,130 212,150 205,180 190,190 180,203 215,195 240,195 240,160 270,112 300,115 320,125 350,122 365,125 395,107 415,135 422,165 455,185 490,162 500,185 512,208 530,225 537,245 525,260 528,290 530,330 518,350 535,370 530,385 540,395 545,430 580,435 600,430 610,405 635,393 650,410 650,430 690,422 740,430 785,430 792,450 815,475 822,500 808,525 800,545 835,565 847,590 835,615 800,650 770,670 700,700 150,700 155,660 185,650 200,640 195,605 205,570 218,530 225,490 215,500 200,545 175,520 168,485 150,490 110,505 70,525 62,505 60,430 62,400 50,360 62,340 75,330 65,300 55,280 70,265 65,240 35,235 28,205 60,190 40,160 40,140 75,120 85,100 60,80 55,60 72,60'

// larger parcels, drawn over the small ones
const parcels = [
  [blue, '40,142 75,120 88,114 143,124 158,192 140,190 122,168 105,185 84,198 60,188 50,165'],
  [pink, '28,205 60,186 84,198 84,232 70,245 35,235'],
  [pink, '84,198 105,185 122,166 140,192 135,240 100,238 84,225'],
  [mint, '85,75 125,75 145,122 110,118 85,100'],
  [pink, '70,35 102,32 100,68 80,65 68,50'],
  [mint, '102,32 125,38 120,66 102,68'],
  [pink, '150,60 180,75 185,95 160,110 148,90'],
  [mint, '160,140 205,140 200,182 165,178'],
  [pink, '140,192 165,192 170,235 138,240'],
  [mint, '62,243 100,240 103,270 65,270'],
  [pink, '75,275 108,272 125,320 95,350 75,330'],
  [pink, '104,240 140,240 145,290 130,322 112,300'],
  [pink, '150,262 182,258 195,300 165,315 146,290'],
  [pink, '185,300 215,300 215,335 190,335'],
  [pink, '60,424 98,430 108,480 108,505 70,525 62,505'],
  [pink, '104,430 165,430 168,475 150,490 112,502'],
  [mint, '95,398 140,400 145,430 97,430'],
  [blue, '90,365 128,367 138,395 92,395'],
  [sand, '322,155 350,122 378,142 397,195 360,228 340,210 322,208'],
  [sand, '258,178 305,160 320,168 322,208 290,208'],
  [pink, '384,140 397,107 422,165 415,202 400,200'],
  [pink, '422,165 455,182 462,225 420,235 412,205'],
  [pink, '258,205 295,260 315,290 245,292 222,300 240,250'],
  [aqua, '222,310 250,292 315,290 318,320 292,380 275,345 240,338'],
  [pink, '340,268 378,275 372,325 330,300'],
  [blue, '470,218 510,210 530,230 522,295 480,305 465,270'],
  [blue, '460,290 482,305 482,335 515,350 512,378 465,370'],
  [pink, '478,308 522,295 528,335 485,345'],
  [blue, '378,380 390,340 430,298 440,340 436,378 400,395'],
  [pink, '440,345 460,340 462,378 432,378'],
  [blue, '312,360 345,355 376,385 350,410 308,395'],
  [blue, '262,430 295,410 305,440 285,470 262,455'],
  [blue, '305,430 325,390 350,455 370,470 370,500 345,510 320,515'],
  [blue, '400,385 455,380 478,500 460,525 345,510 380,500 440,480 455,465 430,445 425,410'],
  [blue, '290,532 340,512 465,522 400,540 310,585 292,560'],
  [pink, '385,412 432,415 425,448 385,430'],
  [pink, '374,452 425,448 458,482 400,495 372,480'],
  [aqua, '330,410 380,408 385,435 350,455'],
  [pink, '300,458 340,480 335,502 295,478'],
  [mint, '280,475 325,520 305,525 285,500'],
  [aqua, '172,430 228,428 240,470 218,480 200,545 168,510'],
  [pink, '240,430 275,480 265,500 240,465'],
  [pink, '215,360 250,340 275,378 240,400 215,385'],
  [pink, '225,498 280,512 290,555 218,540'],
  [blue, '210,542 285,560 275,598 200,595'],
  [pink, '195,598 290,600 280,628 205,620'],
  [sand, '460,385 490,405 495,425 462,425'],
  [mint, '485,475 520,430 520,395 540,395 545,445 530,478 520,530 490,500'],
  [aqua, '462,432 508,425 485,478 465,450'],
  [aqua, '460,532 492,528 495,602 450,580'],
  [blue, '570,512 580,465 605,452 630,452 632,490'],
  [sand, '548,448 575,440 578,470 562,500 550,485'],
  ['#fdf8d4', '642,445 660,435 690,480 665,495 638,475'],
  [peach, '785,510 815,500 808,530 790,540'],
  [peach, '715,620 745,562 800,550 835,565 847,590 830,625 770,670 700,700 705,640'],
  [mint, '720,530 755,515 762,545 735,565 712,555'],
  [blue, '705,565 720,565 712,620 690,650 685,640'],
  [pink, '672,540 690,530 700,575 680,600'],
  [blue, '325,580 345,562 370,610 335,622'],
  [mint, '765,485 805,470 815,500 780,505'],
  [pink, '745,445 785,450 790,470 755,480'],
  [pink, '400,655 440,635 480,690 395,690'],
  [pink, '230,635 310,630 300,660 260,665'],
  [aqua, '615,545 650,492 672,492 650,530 625,548'],
]

const palette = [pink, pink, pink, pink, pink, mint, pink, blue, pink, aqua, mint]
const coolPalette = [aqua, aqua, mint, aqua, pink, mint]

const noise = (n) => {
  const s = Math.sin(n * 127.1 + 11.7) * 43758.5453
  return s - Math.floor(s)
}

const toPoints = (text) => text.split(' ').map((pair) => pair.split(',').map(Number))
const toPath = (pts) => `M${pts.map((p) => `${p[0].toFixed(1)},${p[1].toFixed(1)}`).join('L')}Z`

// break long edges into short crooked ones
const roughen = (pts, step, amount) => pts.flatMap((a, i) => {
  const b = pts[(i + 1) % pts.length]
  const n = Math.max(1, Math.round(Math.hypot(b[0] - a[0], b[1] - a[1]) / step))
  return Array.from({ length: n }, (_, k) => {
    const t = k / n
    const x = a[0] + (b[0] - a[0]) * t
    const y = a[1] + (b[1] - a[1]) * t
    return [x + (noise(x + y * 3) - 0.5) * amount, y + (noise(x * 5 + y) - 0.5) * amount]
  })
})

// keep the part of a cell that lies nearer to a than to b
const nearer = (cell, a, b) => {
  const mx = (a[0] + b[0]) / 2
  const my = (a[1] + b[1]) / 2
  const side = (p) => (p[0] - mx) * (b[0] - a[0]) + (p[1] - my) * (b[1] - a[1])
  return cell.flatMap((p, i) => {
    const q = cell[(i + 1) % cell.length]
    const sp = side(p)
    const sq = side(q)
    const out = sp <= 0 ? [p] : []
    if (sp * sq < 0) {
      const t = sp / (sp - sq)
      out.push([p[0] + (q[0] - p[0]) * t, p[1] + (q[1] - p[1]) * t])
    }
    return out
  })
}

const buildCells = () => {
  const seeds = []
  for (let r = 0; r < 38; r++) {
    for (let c = 0; c < 48; c++) {
      const n = r * 48 + c
      // patches of sparse and dense parcels
      const patch = noise(Math.floor(r / 4) * 31 + Math.floor(c / 4) * 7)
      if (noise(n + 900) < 0.1 + patch * 0.6) continue
      seeds.push([c * 18 + noise(n) * 30, 20 + r * 18 + noise(n + 400) * 30])
    }
  }
  return seeds.map((s, i) => {
    let cell = [[s[0] - 50, s[1] - 50], [s[0] + 50, s[1] - 50], [s[0] + 50, s[1] + 50], [s[0] - 50, s[1] + 50]]
    seeds.forEach((o, k) => {
      if (k !== i && Math.abs(o[0] - s[0]) < 100 && Math.abs(o[1] - s[1]) < 100) cell = nearer(cell, s, o)
    })
    const cool = s[0] > 350 && s[0] < 500 && s[1] > 525 && s[1] < 650
    const colors = cool ? coolPalette : palette
    return { color: colors[Math.floor(noise(i + 77) * colors.length)], d: toPath(cell) }
  })
}

const cells = buildCells()
const coastPath = toPath(roughen(toPoints(coast), 6, 9))

const ParcelMap = () => (
  <svg width="290" height="230" viewBox="0 0 870 690" role="img" aria-label="Parcel map">
    <clipPath id="coast"><path d={coastPath} /></clipPath>
    <g clipPath="url(#coast)" stroke="#6c6672" strokeWidth="2" strokeLinejoin="round">
      {cells.map((cell, i) => <path key={i} d={cell.d} fill={cell.color} />)}
      {parcels.map(([color, pts], i) => <path key={i} d={toPath(roughen(toPoints(pts), 14, 4))} fill={color} />)}
      <path d="M394 358h12v14h-12z" fill={pink} />
      <path d="M340 352l20-8 12 14-16 14z" fill="#fff" />
    </g>
    <path d={coastPath} fill="none" stroke="#5c5660" strokeWidth="2.500" />
    <path d="M70 625l25-8 13 38-10 8z" fill={pink} stroke="#6c6670" strokeWidth="2" />
  </svg>
)

/* ---------- side dock ---------- */

const Dock = styled.div`
  flex: none;
  width: 20px;
  margin-left: 2px;
  padding-top: 2px;
  display: flex;
  flex-direction: column;
  align-items: flex-start;
`

const DockTab = styled.button`
  display: flex;
  flex-direction: column;
  align-items: center;
  justify-content: flex-start;
  gap: 2px;
  width: 19px;
  height: ${(p) => p.$length}px;
  margin-left: 1px;
  margin-bottom: ${(p) => (p.$joined ? 0 : 14)}px;
  padding-top: 3px;
  border: 1px solid #b9b3bc;
  border-radius: 3px;
  background: #f8f3fa;
  color: #55505a;
  span {
    writing-mode: vertical-rl;
    line-height: 14px;
    font-family: "Open Sans", sans-serif;
    white-space: nowrap;
  }
`

/* ---------- attribute table ---------- */

const TableArea = styled.div`
  display: flex;
  border-top: 4px solid #7d7a80;
  border-left: 2px solid #7d7a80;
  background: #f3eef5;
`

const GridWrap = styled.div`
  flex: 1;
  min-width: 0;
  padding: 0 87px 0 1px;
`

const Grid = styled.table`
  width: 100%;
  table-layout: fixed;
  border-collapse: collapse;
  font-family: "Liberation Sans", Arial, sans-serif;
  font-size: 10px;
  line-height: 12px;
  th, td {
    height: 13px;
    padding: 0 4px;
    border: 1px solid #4b5a60;
    white-space: nowrap;
    overflow: hidden;
  }
  th {
    padding: 0;
    border-width: 1px 2px 2px 1px;
    border-color: #2b292d;
    background: #f6f1f8;
  }
  td:first-child {
    background: #f3eef5;
    border-width: 1px 2px;
    border-color: #2b292d;
  }
`

const GridRow = styled.tr`
  background: ${(p) => (p.$plain ? '#fefbff' : '#b4fbff')};
`

const Cell = styled.td`
  text-align: ${(p) => (p.$right ? 'right' : 'left')};
`

const NavBar = styled.div`
  display: flex;
  align-items: center;
  height: 27px;
  padding-left: 5px;
  background: linear-gradient(#fdf7ff, #f1ecf3);
`

const RecordInput = styled.input`
  width: 52px;
  height: 20px;
  padding-right: 1px;
  text-align: right;
  background: #fefbff;
`

const NavText = styled.span`
  padding-left: 4px;
`

const SheetTabs = styled.div`
  height: 21px;
  padding-left: 3px;
  background: #f8f0fb;
  button {
    height: 18px;
    padding: 0 1px;
    border: 1px solid #b9b3bc;
    border-top: none;
    border-radius: 0 0 3px 3px;
    background: #fefbff;
  }
  span {
    display: block;
    padding: 0 2px;
    line-height: 13px;
    border: 1px dotted #333;
  }
`

const DrawingArea = styled.footer`
  flex: none;
  height: 43px;
  background: linear-gradient(#fbf4fe, #f2eaf6);
`

const Pointer = styled.svg`
  position: absolute;
  left: 13px;
  top: 141px;
`

const TablePanel = styled.section`
  flex: none;
`

const TableInner = styled.div`
  position: relative;
`

const layers = [
  ['amarelo', sand],
  ['amarelo1', mint],
  ['cinza', peach],
  ['laranja', '#c9c3f4'],
  ['marrom', '#cbe3f8'],
  ['marron', '#f4e3f1'],
]

const columns = [
  ['FID', 33, true], ['Shape', 46], ['ID', 26, true], ['"NOME"', 52], ['AREA', 105, true], ['PERIMETER', 72, true],
  ['HA', 59, true], ['INFORMACAO', undefined], ['Hectares', 73, true], ['Acres', 72, true], ['CLASSE', 52],
]

const records = [
  [2, 'B122', '9118293678,689', '446284,186', '491,6882', 'Processo de titulação, protocolo: "135/2007"', '588,275835', '1453,661246'],
  [3, 'B107', '23510244553,086', '902289,278', '1407,6394', 'Posse sem litígio, georreferenciamento em andamento', '1516,786938', '3748,062148'],
  [4, 'J066', '12223707756,6', '703812,003', '788,5552', 'Posse da área devoluta, laudo "J025", com litigio, titulação em andamento.', '788,62473', '1948,619719'],
  [5, 'A082', '41793853147,031', '983377,031', '0', 'Em processo de Georefenciamento, problema om posseiro', '2696,37223', '6662,880884'],
  [6, 'A113', '21239527186,924', '728588,072', '0', 'Paroquial Georeferenciada, em processo de titulação.', '1370,289336', '3386,058691'],
  [7, 'A172', '14220601887,271', '811701,008', '0', 'Parte em processo de titulação e parte direito de posse', '917,456351', '2267,084017'],
  [8, 'A224', '42286895675,335', '855224,246', '0', 'Parte Titulo Definitivo e parte e processo de titulação, parte da paroquial Mocambo', '2728,181361', '6741,48296'],
  [9, 'A227', '4643097258,754', '481589,757', '0', 'Parte do loteamento Cerigela Custódio, geo em andamento', '299,554063', '740,214209'],
  [10, 'A260', '37699194480,215', '1204842,298', '0', 'Parte em processo de titulação', '2432,201231', '4185,759041'],
  [11, 'J267', '43990591553,24', '1124847,045', '0', 'Parte titulada e parte em processo de titulação', '2838,097005', '0'],
  [12, 'J252', '109774197260,637', '1530178,544', '0', 'Processo de titulação', '7082,19211', '0'],
]

const toCells = ([fid, nome, area, perimeter, ha, info, hectares, acres]) => (
  [fid, 'Polygon', 0, `"${nome}"`, area, perimeter, ha, info, hectares, acres, 'amarelo']
)

const menuItems = ['File', 'Edit', 'View', 'Bookmarks', 'Insert', 'Selection', 'Geoprocessing', 'Customize', 'Windows', 'Help']

const MoreButton = () => <More aria-label="Toolbar options"><Caret /></More>
const Drop = ({ children }) => <TextButton>{children}<Caret /></TextButton>

const Toolbars = () => <>
  <ToolRow>
    <Bar>
      <Grip />
      <Tools items="new open save print | cut copy paste del | undo redo | add v |" />
      <Select label="Map scale" width={137} value="" faded />
      <Tools items="_ *sketch _ winTable winCatalog winSearch winToolbox winPython | model" />
      <MoreButton />
    </Bar>
    <Bar><Grip /><EtLogo /><Divider /><Drop>Help</Drop><MoreButton /></Bar>
    <Bar><Grip /><Drop>Snapping</Drop><Tools items="*snapPoint snapEnd snapVertex *snapEdge" /><MoreButton /></Bar>
    <Bar><Grip /><Tools items="gA gB gC gD gE | burst sphere | gF gG gH gI gJ | gK gL" /><MoreButton /></Bar>
  </ToolRow>
  <ToolRow>
    <Bar>
      <Grip />
      <Tools items="zoomIn zoomOut pan globe | shrink expand | back forward | selFeature v clearSel | *arrow _ info bolt html | measure | find route xy | time | viewer" />
      <MoreButton />
    </Bar>
    <Bar>
      <Grip /><Drop>Editor</Drop>
      <Tools items="| editTool editNote | segment arc trace v pointTool | reshape cutPoly split splitLine rotate | attrs sketchProp | createFeat" />
      <MoreButton />
    </Bar>
  </ToolRow>
</>

const TableOfContents = () => (
  <Contents>
    <PanelHead $pale>
      <h2>Table Of Contents</h2>
      <HeadButton aria-label="Pin"><Icon name="pin" size={10} /></HeadButton>
      <HeadButton aria-label="Close"><Icon name="close" size={10} /></HeadButton>
    </PanelHead>
    <Bar $inset={4}><Tools items="*drawOrder source visible bySel | options" /></Bar>
    <TreeBox>
      <Tree>
        <li>
          <TreeRoot><Toggle aria-label="Collapse Layers" /><Icon name="layers" size={14} />Layers</TreeRoot>
        </li>
        {layers.map(([name, color], i) => (
          <Layer key={name}>
            <LayerRow $active={i === 0}>
              <Toggle aria-label={`Collapse ${name}`} />
              <Check type="checkbox" id={name} defaultChecked />
              <label htmlFor={name}>{name}</label>
            </LayerRow>
            <Swatch $color={color} />
          </Layer>
        ))}
      </Tree>
      <VScroll size={50} after={50} />
    </TreeBox>
  </Contents>
)

const MapView = () => (
  <MapPane>
    <MapRow>
      <Canvas><ParcelMap /></Canvas>
      <VScroll size={46} after={54} />
    </MapRow>
    <MapFoot>
      <ViewTab $on aria-label="Data view"><Icon name="dataView" size={10} /></ViewTab>
      <ViewTab $gap={7} aria-label="Layout view"><Icon name="layoutView" size={10} /></ViewTab>
      <ViewTab aria-label="Refresh"><Icon name="refresh" size={10} /></ViewTab>
      <ViewTab aria-label="Pause"><Icon name="pause" size={10} /></ViewTab>
      <Track $row>
        <Step aria-label="Scroll left"><Icon name="left" size={9} /></Step>
        <Thumb $row />
        <Step aria-label="Scroll right"><Icon name="right" size={9} /></Step>
      </Track>
    </MapFoot>
  </MapPane>
)

const AttributeTable = () => (
  <TablePanel>
    <PanelHead>
      <h2>Table</h2>
      <HeadButton aria-label="Pin"><Icon name="pin" size={10} /></HeadButton>
      <HeadButton aria-label="Close"><Icon name="close" size={10} /></HeadButton>
    </PanelHead>
    <Bar $inset={4}><Tools items="options v | related v | selAttr switchSel clearSel zoomSel del" /></Bar>
    <PanelHead>
      <h2>amarelo</h2>
      <HeadButton aria-label="Close amarelo"><Icon name="close" size={10} /></HeadButton>
    </PanelHead>
    <TableInner>
      <TableArea>
        <GridWrap>
          <Grid>
            <colgroup>
              <col width="13" />
              {columns.map(([name, width]) => <col key={name} width={width} />)}
            </colgroup>
            <thead>
              <tr>
                <th aria-label="Row" />
                {columns.map(([name]) => <th key={name}>{name}</th>)}
              </tr>
            </thead>
            <tbody>
              {records.map((record) => (
                <GridRow key={record[0]} $plain={record[0] === 12}>
                  <td />
                  {toCells(record).map((value, i) => <Cell key={i} $right={columns[i][2]}>{value}</Cell>)}
                </GridRow>
              ))}
            </tbody>
          </Grid>
        </GridWrap>
        <VScroll before={16} size={84} />
      </TableArea>
      <Pointer width="14" height="21" viewBox="0 0 12 19" aria-hidden="true">
        <path d="M1 1v14l3.500-3 2.500 6 2.500-1-2.500-5.500h4.500z" fill="#fff" stroke="#333" />
      </Pointer>
    </TableInner>
    <NavBar>
      <Tools items="first prev" />
      <RecordInput aria-label="Record" defaultValue="1" />
      <Tools items="next last | *allRows selRows |" />
      <NavText>(0 out of 13 Selected)</NavText>
    </NavBar>
    <SheetTabs><button><span>amarelo</span></button></SheetTabs>
  </TablePanel>
)

const Drawing = () => (
  <DrawingArea>
    <ToolRow>
      <Bar>
        <Grip /><Drop>Drawing</Drop>
        <Tools items="*arrow spin nudge | rect v" />
        <ToolButton><Emphasis $kind="A">A</Emphasis></ToolButton>
        <Tools items="v vertices |" />
        <Select label="Font" width={160} value="Arial" mark="fontMark" />
        <Select label="Font size" width={43} value="10" />
        {['B', 'I', 'U'].map((kind) => <ToolButton key={kind}><Emphasis $kind={kind}>{kind}</Emphasis></ToolButton>)}
        <Divider />
        <InkButton><span>A</span></InkButton>
        <Tools items="V fillColor V lineColor V markColor V" />
        <MoreButton />
      </Bar>
      <Bar>
        <Grip />
        <Tools items="pZoomIn pZoomOut pPan pFull pOne | pIn pOut | pBack pNext" />
        <Select label="Layout zoom" width={55} value="" faded chosen="100" />
        <Tools items="| #draft focusFrame changeLayout dataDriven" />
        <MoreButton />
      </Bar>
    </ToolRow>
  </DrawingArea>
)

const App = () => (
  <Page>
    <GlobalStyle />
    <Frame>
      <TitleBar>
        <Icon name="logo" />
        <h1>Untitled - ArcMap</h1>
        <WindowButtons>
          <WindowButton aria-label="Resize"><Icon name="resize" size={10} /></WindowButton>
          <WindowButton aria-label="Minimize"><Icon name="minimize" size={11} /></WindowButton>
          <WindowButton aria-label="Restore"><Icon name="restore" size={11} /></WindowButton>
          <CloseWindow aria-label="Close"><Icon name="close" size={9} /></CloseWindow>
        </WindowButtons>
      </TitleBar>
      <Menu>{menuItems.map((item) => <button key={item}>{item}</button>)}</Menu>
      <Toolbars />
      <Body>
        <Work>
          <Upper>
            <TableOfContents />
            <MapView />
          </Upper>
          <AttributeTable />
        </Work>
        <Dock>
          <DockTab $length={84}><Icon name="winToolbox" /><span>ArcToolbox</span></DockTab>
          <DockTab $length={102}><Icon name="winImage" /><span>Image Analysis</span></DockTab>
          <DockTab $length={66} $joined><Icon name="winCatalog" /><span>Catalog</span></DockTab>
          <DockTab $length={63}><Icon name="winSearch" /><span>Search</span></DockTab>
        </Dock>
      </Body>
      <Drawing />
    </Frame>
  </Page>
)

export default App
